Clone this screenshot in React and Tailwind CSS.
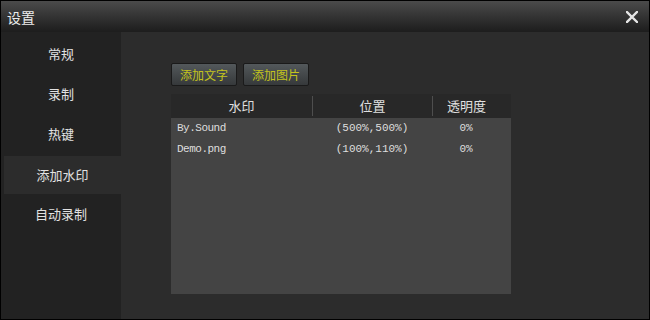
const NAV = ['常规', '录制', '热键', '添加水印', '自动录制']

const ROWS = [
  { name: 'By.Sound', pos: '(500%,500%)', alpha: '0%' },
  { name: 'Demo.png', pos: '(100%,110%)', alpha: '0%' },
]

const cjk = { fontFamily: '"Noto Sans CJK SC", "Noto Sans", sans-serif' }
const mono = { fontFamily: '"Liberation Mono", "Noto Sans CJK SC", monospace' }

export default function App() {
  return (
    <div
      className="w-[650px] h-[320px] border border-black bg-[#2c2c2c] flex flex-col overflow-hidden"
      style={cjk}
    >
      {/* Title bar */}
      <div className="h-[31px] shrink-0 flex items-center justify-between pl-[6px] pr-[11px] bg-gradient-to-b from-[#4b4b4b] to-[#1d1d1d]">
        <span className="text-[14px] text-[#ececec] leading-none">设置</span>
        <svg width="12" height="12" viewBox="0 0 12 12">
          <path d="M1 1 L11 11 M11 1 L1 11" stroke="#e6e6e6" strokeWidth="2.4" strokeLinecap="square" />
        </svg>
      </div>

      <div className="flex flex-1 min-h-0">
        {/* Sidebar */}
        <div className="w-[120px] shrink-0 bg-[#222222] pt-[2px] flex flex-col">
          {NAV.map((item) =>
            item === '添加水印' ? (
              <div
                key={item}
                className="ml-[3px] mt-[2px] h-[38px] flex items-center justify-center bg-[#2c2c2c] text-[13px] text-[#e2e2e2]"
              >
                {item}
              </div>
            ) : (
              <div key={item} className="h-10 flex items-center justify-center text-[13px] text-[#e2e2e2]">
                {item}
              </div>
            )
          )}
        </div>

        {/* Content */}
        <div className="flex-1 pl-[50px] pt-[31px]">
          <div className="flex gap-[6px]">
            {['添加文字', '添加图片'].map((label) => (
              <button
                key={label}
                className="w-[66px] h-[23px] flex items-center justify-center rounded-[2px] border border-[#1a1a1a] bg-gradient-to-b from-[#53585b] to-[#36393b] text-[12px] text-[#c4c41c] leading-none"
              >
                {label}
              </button>
            ))}
          </div>

          <div className="mt-[8px] w-[340px] h-[200px] bg-[#444444] flex flex-col">
            <div className="h-[24px] bg-[#282828] flex text-[13px] text-[#e0e0e0]">
              <div className="w-[141px] flex items-center justify-center">水印</div>
              <div className="w-px h-[20px] self-center bg-[#4e4e4e]" />
              <div className="w-[119px] flex items-center justify-center">位置</div>
              <div className="w-px h-[20px] self-center bg-[#4e4e4e]" />
              <div className="w-[67px] flex items-center justify-center">透明度</div>
            </div>
            {ROWS.map((row) => (
              <div key={row.name} className="h-[21px] flex items-center text-[11px] text-[#dedede]" style={mono}>
                <div className="w-[141px] pl-[6px] tracking-[-0.5px]">{row.name}</div>
                <div className="w-[120px] text-center">{row.pos}</div>
                <div className="w-[68px] text-center">{row.alpha}</div>
              </div>
            ))}
          </div>
        </div>
      </div>
    </div>
  )
}
